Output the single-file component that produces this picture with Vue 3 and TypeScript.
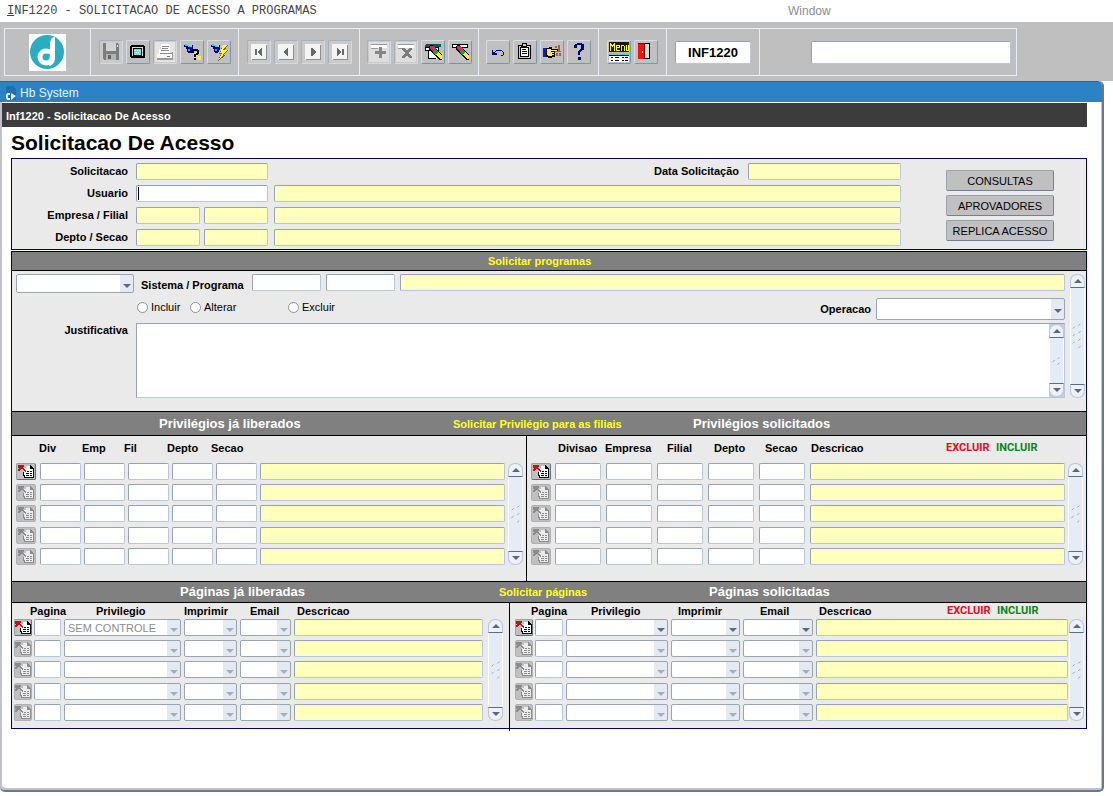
<script setup lang="ts">
import { ref } from 'vue'

interface Shape {
  d: string
  fill?: string
  stroke?: string
  width?: number
}
interface Tool {
  name: string
  disabled?: boolean
  shapes: Shape[]
}

const navBox: Shape[] = [
  { d: 'M4 4h16v16H4z', fill: '#f4f4f4' },
  { d: 'M19 5v14H5v1h15V5z', fill: '#8f8f8f' },
]

const pointer: Shape[] = [
  { d: 'M4 5h3v1h2v1h3v-2h1v5h-1v2h-1v1h-3v-1H7V9H6V7H4z', fill: '#000080' },
  { d: 'M5 4h2v1h2v1h2v1H8V6H5z', fill: '#2fd5e8' },
  { d: 'M8 9h2v2H8z', fill: '#19a8e0' },
]

const eraser: Shape[] = [
  { d: 'M9 5h3l9 10v5h-3L8 10V6z', fill: '#000' },
  { d: 'M9 6h3l3 3-3 3-3-3z', fill: '#e0246a' },
  { d: 'M14 9l3 3-3 3-3-3z', fill: '#18a048' },
  { d: 'M17 12l4 4v3h-2l-4-4z', fill: '#ffee20' },
]

const toolGroups: Tool[][] = [
  [
    {
      name: 'Salvar',
      disabled: true,
      shapes: [
        { d: 'M4 3h15v1h1v16H5v-1H4z', fill: '#7d7d7d' },
        { d: 'M7 3h10v8H7z', fill: '#d2d2d2' },
        { d: 'M7 14h10v6H7z', fill: '#b4b4b4' },
        { d: 'M9 15h3v4H9z', fill: '#666' },
        { d: 'M18 5h1v2h-1z', fill: '#eee' },
      ],
    },
    {
      name: 'Tela',
      shapes: [
        { d: 'M5 5h13v1h1v12H5v-1H4V6h1z', fill: '#000' },
        { d: 'M6 7h11v9H6z', fill: '#dcdcdc' },
        { d: 'M7 8h9v8H7z', fill: '#000' },
        { d: 'M8 9h7v6H8z', fill: '#78dce0' },
        { d: 'M9 10h1v1H9zm2 0h1v1h-1zm2 0h1v1h-1zm-3 2h1v1h-1zm2 0h1v1h-1zm-3 2h1v1H9zm4 0h1v1h-1z', fill: '#fff' },
      ],
    },
    {
      name: 'Imprimir',
      disabled: true,
      shapes: [
        { d: 'M2 2h20v20H2z', fill: '#e4e4e4' },
        { d: 'M8 4h9v10H6V9h2z', fill: '#fff' },
        { d: 'M9 6h7v1H9zm0 2h6v1H9zm-1 2h8v1H8zm-1 3h12v1H7z', fill: '#8a8a8a' },
        { d: 'M4 14h15v4H4z', fill: '#f8f8f8' },
        { d: 'M4 18h16v2H4zm15-6h1v7h-1z', fill: '#9a9a9a' },
        { d: 'M14 16h3v1h-3z', fill: '#777' },
      ],
    },
    {
      name: 'Entrar consulta',
      shapes: [
        { d: 'M15 12h5v2h-2v2h3v4h-4v-2h-3v-2h2v-2h-1z', fill: '#f2e85a' },
        ...pointer,
        { d: 'M11 10h2V9h5v1h1v4h-1v1h-2v2h-2v-3h2v-1h1v-2h-3v2h-3zM14 18h2v2h-2z', fill: '#000' },
      ],
    },
    {
      name: 'Executar consulta',
      shapes: [
        ...pointer,
        { d: 'M16 5h5l-3 5h3l-4 5h2l-8 6 3-7h-2z', fill: '#6b6300' },
        { d: 'M16 5h4l-4 5h4l-5 5h2l-5 4 3-6h-2z', fill: '#ffff20' },
      ],
    },
  ],
  [
    { name: 'Primeiro', disabled: true, shapes: [...navBox, { d: 'M8 9h2v6H8zm7-1v8h-1l-3-4 3-4z', fill: '#686868' }] },
    { name: 'Anterior', disabled: true, shapes: [...navBox, { d: 'M13 8h1v8h-1l-4-4z', fill: '#686868' }] },
    { name: 'Proximo', disabled: true, shapes: [...navBox, { d: 'M10 8h1l4 4-4 4h-1z', fill: '#686868' }] },
    { name: 'Ultimo', disabled: true, shapes: [...navBox, { d: 'M9 8h1l3 4-3 4H9zm5 1h2v6h-2z', fill: '#686868' }] },
  ],
  [
    {
      name: 'Inserir registro',
      disabled: true,
      shapes: [
        { d: 'M2 2h20v20H2z', fill: '#dedede' },
        { d: 'M4 4h16v4H4z', fill: '#fff' },
        { d: 'M4 4h16v1H4zM4 8h7v1H4z', fill: '#999' },
        { d: 'M12 7h3v4h4v3h-4v4h-3v-4H8v-3h4z', fill: '#858585' },
      ],
    },
    {
      name: 'Remover registro',
      disabled: true,
      shapes: [
        { d: 'M2 2h20v20H2z', fill: '#dedede' },
        { d: 'M4 4h16v4H4z', fill: '#fff' },
        { d: 'M4 4h16v1H4zM4 8h5v1H4z', fill: '#999' },
        { d: 'M8 8h3l2 3 2-3h3v1l-3 4 3 4v1h-3l-2-3-2 3H8v-1l3-4-3-4z', fill: '#7c7c7c' },
      ],
    },
    {
      name: 'Limpar bloco',
      shapes: [
        { d: 'M5 4h15v3H4V5h1z', fill: '#0b5650' },
        { d: 'M4 7h14v4H4z', fill: '#000' },
        { d: 'M5 8h12v2H5z', fill: '#fff' },
        { d: 'M8 11h8v8H8z', fill: '#fff' },
        { d: 'M7 11h1v7H7zm0 7h8v1H7z', fill: '#000' },
        ...eraser,
      ],
    },
    {
      name: 'Limpar registro',
      shapes: [
        { d: 'M4 4h16v4H4z', fill: '#000' },
        { d: 'M5 5h14v2H5z', fill: '#fff' },
        ...eraser,
      ],
    },
  ],
  [
    {
      name: 'Desfazer',
      shapes: [
        { d: 'M6 10h1v2h2v1h2v2H6z', fill: '#000080' },
        { d: 'M8 13l3-3h4l2 2v3l-2 1', stroke: '#000080', width: 1 },
      ],
    },
    {
      name: 'Area de transferencia',
      shapes: [
        { d: 'M5 5h13v14H5z', fill: '#000' },
        { d: 'M6 6h11v12H6z', fill: '#d9d36a' },
        { d: 'M7 7h9v10H7z', fill: '#000' },
        { d: 'M8 8h7v8H8z', fill: '#fff' },
        { d: 'M9 3h5v4H8V5h1z', fill: '#000' },
        { d: 'M10 4h3v2h-3z', fill: '#f4e900' },
        { d: 'M9 9h4v1H9zm0 2h5v1H9zm0 2h5v1H9z', fill: '#000080' },
      ],
    },
    {
      name: 'Selecionar',
      shapes: [
        { d: 'M3 8h3v9H3z', fill: '#0020c8' },
        { d: 'M6 8h3V7h3v2h6v2h-3v6h-3v1H8v-1H6z', fill: '#000' },
        { d: 'M7 9h4v1h6v1h-6v1h3v1h-2v1h2v1h-2v1H8v-1H7z', fill: '#f4e66b' },
        { d: 'M15 6h2v2h-2zm3-1h2v3h-2zm-3 6h6v1h-6zm3-3h2v3h-2zm-2 5h2v3h-2zm3 0h2v3h-2z', fill: '#cf4848' },
      ],
    },
    {
      name: 'Ajuda',
      shapes: [
        { d: 'M7 5h1V4h2V3h5v1h2v6h-2v1h-1v1h-1v3h-2v-4h1v-1h1V9h1V5h-4v3H7zM11 17h3v3h-3z', fill: '#000084' },
      ],
    },
  ],
  [
    {
      name: 'Menu',
      shapes: [
        { d: 'M2 2h20v10H2z', fill: '#1a1900' },
        { d: 'M3 3h1v1h1v1h1V4h1V3h1v8H7V6H6v1H5V6H4v5H3zm6 2h4v3h-3v2h3v1H9zm1 1v1h2V6zm4-1h3v1h1v5h-1V6h-2v5h-1zm5 0h1v5h1V5h1v6h-3z', fill: '#f7f020' },
        { d: 'M2 13h20v2H2z', fill: '#62d2ce' },
        { d: 'M2 15h20v7H2z', fill: '#fff' },
        { d: 'M2 15h20v1H2zM4 17h2v1H4zm4 0h4v1H8zm7 0h2v1h-2zm3 0h3v1h-3zM4 20h2v1H4zm4 0h4v1H8zm7 0h2v1h-2zm3 0h3v1h-3z', fill: '#000' },
      ],
    },
    {
      name: 'Sair',
      shapes: [
        { d: 'M4 3h12v16H4z', fill: '#000' },
        { d: 'M11 4h4v14h-4z', fill: '#dcdcdc' },
        { d: 'M4 4h6v13l-2 2H4z', fill: '#f01414' },
        { d: 'M4 3h7v15h-1V4H4z', fill: '#7c0000' },
        { d: 'M8 11h1v2H8z', fill: '#ffe060' },
      ],
    },
  ],
]

interface Column {
  label: string
  kind: 'code' | 'list' | 'desc'
}
interface Pane {
  id: string
  title: string
  listsActive?: boolean
  marks?: boolean
  headings: string[]
  columns: Column[]
}
interface Section {
  id: string
  caption: string
  panes: Pane[]
}

const codes = (labels: string[]): Column[] => labels.map((label) => ({ label, kind: 'code' }))
const desc: Column = { label: 'Descricao', kind: 'desc' }
const pageColumns: Column[] = [
  { label: 'Pagina', kind: 'code' },
  { label: 'Privilegio', kind: 'list' },
  { label: 'Imprimir', kind: 'list' },
  { label: 'Email', kind: 'list' },
  desc,
]
const pageHeadings = ['Pagina', 'Privilegio', 'Imprimir', 'Email', 'Descricao']

const sections: Section[] = [
  {
    id: 'privileges',
    caption: 'Solicitar Privilégio para as filiais',
    panes: [
      {
        id: 'priv-granted',
        title: 'Privilégios já liberados',
        headings: ['Div', 'Emp', 'Fil', 'Depto', 'Secao'],
        columns: [...codes(['Div', 'Emp', 'Fil', 'Depto', 'Secao']), desc],
      },
      {
        id: 'priv-requested',
        title: 'Privilégios solicitados',
        marks: true,
        headings: ['Divisao', 'Empresa', 'Filial', 'Depto', 'Secao', 'Descricao'],
        columns: [...codes(['Divisao', 'Empresa', 'Filial', 'Depto', 'Secao']), desc],
      },
    ],
  },
  {
    id: 'pages',
    caption: 'Solicitar páginas',
    panes: [
      { id: 'page-granted', title: 'Páginas já liberadas', headings: pageHeadings, columns: pageColumns },
      {
        id: 'page-requested',
        title: 'Páginas solicitadas',
        marks: true,
        listsActive: true,
        headings: pageHeadings,
        columns: pageColumns,
      },
    ],
  },
]

const actions = ['CONSULTAS', 'APROVADORES', 'REPLICA ACESSO']
const operations = ['Incluir', 'Alterar', 'Excluir']
const operation = ref('')
const program = ref('INF1220')
</script>

<template>
  <div class="app">
    <nav class="menubar">
      <button type="button" class="menu-main"><u>I</u>NF1220 - SOLICITACAO DE ACESSO A PROGRAMAS</button>
      <button type="button" class="menu-window">Window</button>
    </nav>

    <header class="toolbar">
      <div class="segment seg-logo">
        <svg class="logo" viewBox="0 0 37 37" aria-hidden="true">
          <path d="M0 0h37v37H0z" fill="#fff" />
          <circle cx="18" cy="18" r="17" fill="#28aec0" />
          <circle cx="17" cy="23" r="6" fill="none" stroke="#fff" stroke-width="5" />
          <path d="M21 25V10q0-7 5-7v22q-1 6-6 7z" fill="#fff" />
          <path d="M14 24q2-5 7-4 0 5-5 6z" fill="#28aec0" />
        </svg>
      </div>
      <div v-for="(group, g) in toolGroups" :key="g" class="segment" :class="'seg-' + g">
        <button
          v-for="tool in group"
          :key="tool.name"
          type="button"
          class="tool"
          :aria-label="tool.name"
          :disabled="tool.disabled"
        >
          <svg viewBox="1 1 22 22" shape-rendering="crispEdges" aria-hidden="true">
            <path
              v-for="(s, i) in tool.shapes"
              :key="i"
              :d="s.d"
              :fill="s.fill ?? 'none'"
              :stroke="s.stroke"
              :stroke-width="s.width"
            />
          </svg>
        </button>
      </div>
      <div class="segment seg-code">
        <input v-model="program" class="field program-code" aria-label="Programa" />
      </div>
      <div class="segment seg-message">
        <input class="field message" aria-label="Mensagem" />
      </div>
    </header>

    <main class="window">
      <div class="titlebar">
        <svg viewBox="0 0 12 14" aria-hidden="true">
          <path d="M1 0h7l3 3v11H1z" fill="#1f6fae" />
          <path d="M1 9l1-2h3v2H3v3h2v2H2l-1-2zM6 7l5 3-5 4z" fill="#e6f3fb" />
        </svg>
        <span>Hb System</span>
      </div>
      <div class="module">Inf1220 - Solicitacao De Acesso</div>

      <div class="content">
        <h1>Solicitacao De Acesso</h1>

        <form class="request" @submit.prevent>
          <div class="request-fields">
            <div class="row">
              <label class="caption" for="solicitacao">Solicitacao</label>
              <input id="solicitacao" class="field locked wide-code" readonly />
              <label class="date-label" for="data">Data Solicitação</label>
              <input id="data" class="field locked date" readonly />
            </div>
            <div class="row">
              <label class="caption" for="usuario">Usuario</label>
              <span class="caret-box wide-code"><input id="usuario" class="field" /></span>
              <input class="field locked grow" aria-label="Nome do usuario" readonly />
            </div>
            <div class="row">
              <label class="caption" for="empresa">Empresa / Filial</label>
              <span class="pair">
                <input id="empresa" class="field locked" readonly />
                <input class="field locked" aria-label="Filial" readonly />
              </span>
              <input class="field locked grow" aria-label="Nome da filial" readonly />
            </div>
            <div class="row">
              <label class="caption" for="depto">Depto / Secao</label>
              <span class="pair">
                <input id="depto" class="field locked" readonly />
                <input class="field locked" aria-label="Secao" readonly />
              </span>
              <input class="field locked grow" aria-label="Nome da secao" readonly />
            </div>
          </div>
          <div class="actions">
            <button v-for="a in actions" :key="a" type="button">{{ a }}</button>
          </div>
        </form>

        <div class="blocks">
          <section>
            <div class="bar bar-programs"><h2 class="yellow">Solicitar programas</h2></div>
            <div class="programs">
              <div class="programs-main">
                <div class="program-row">
                  <span class="combo active kind"><select aria-label="Tipo"><option></option></select></span>
                  <label for="sistema">Sistema / Programa</label>
                  <input id="sistema" class="field short" />
                  <input class="field short" aria-label="Codigo do programa" />
                  <input class="field locked grow" aria-label="Nome do programa" readonly />
                </div>
                <div class="options-row">
                  <label v-for="o in operations" :key="o" class="option">
                    <input v-model="operation" type="radio" name="operation" :value="o" />{{ o }}
                  </label>
                  <label class="operation-label" for="operacao">Operacao</label>
                  <span class="combo active operation"><select id="operacao"><option></option></select></span>
                </div>
                <div class="reason-row">
                  <label class="caption" for="justificativa">Justificativa</label>
                  <div class="reason">
                    <textarea id="justificativa"></textarea>
                    <div class="scroll">
                      <button type="button" aria-label="Subir texto"></button>
                      <span class="track">
                        <svg viewBox="0 0 14 28" aria-hidden="true">
                          <path d="M3 15l2-2M8 12l2-2M8 18l2-2" />
                        </svg>
                      </span>
                      <button type="button" class="down" aria-label="Descer texto"></button>
                    </div>
                  </div>
                </div>
              </div>
              <div class="scroll">
                <button type="button" aria-label="Programa anterior"></button>
                <span class="track">
                  <svg viewBox="0 0 14 28" aria-hidden="true">
                    <path d="M2 6l2-2M8 3l2-2M2 14l2-2M8 11l2-2M2 22l2-2M8 19l2-2M8 27l2-2" />
                  </svg>
                </span>
                <button type="button" class="down" aria-label="Proximo programa"></button>
              </div>
            </div>
          </section>

          <section v-for="section in sections" :key="section.id" :class="section.id">
            <div class="bar">
              <h2>{{ section.panes[0].title }}</h2>
              <h2 class="yellow">{{ section.caption }}</h2>
              <h2>{{ section.panes[1].title }}</h2>
            </div>
            <div class="panes">
              <div v-for="pane in section.panes" :key="pane.id" class="pane" :class="pane.id">
                <table :aria-label="pane.title">
                  <thead>
                    <tr>
                      <th v-for="h in pane.headings" :key="h" scope="col">{{ h }}</th>
                      <th v-if="pane.marks" class="exclude" scope="col">EXCLUIR</th>
                      <th v-if="pane.marks" class="include" scope="col">INCLUIR</th>
                    </tr>
                  </thead>
                  <tbody>
                    <tr v-for="n in 5" :key="n">
                      <td>
                        <button type="button" class="move" :disabled="n > 1" :aria-label="'Mover linha ' + n">
                          <svg viewBox="0 0 16 15" shape-rendering="crispEdges" aria-hidden="true">
                            <path class="page" d="M6 4h2V2h5l3 3v9H6z" />
                            <path class="ink" d="M12 1h1v1h1v1h1v1h1v1h-4zM15 5h1v9h-1zM7 13h9v1H7zM9 7h2v1H9zm3 0h2v1h-2zM8 9h3v1H8zm4 0h2v1h-2zM8 11h3v1H8zm4 0h2v1h-2zM5 8h1v3h1v3H6v-2H5z" />
                            <path class="arrow" d="M0 1h6v2H5v1h1v1h1v1h1v2H7V7H6V6H5V5H3v1H2v1H0V5h1V4H0z" />
                          </svg>
                        </button>
                      </td>
                      <td v-for="col in pane.columns" :key="col.label">
                        <span
                          v-if="col.kind === 'list'"
                          class="combo"
                          :class="{ active: pane.listsActive && n === 1 }"
                        >
                          <select :aria-label="col.label + ' ' + n" :disabled="!(pane.listsActive && n === 1)">
                            <option>{{ pane.id === 'page-granted' && n === 1 && col.label === 'Privilegio' ? 'SEM CONTROLE' : '' }}</option>
                          </select>
                        </span>
                        <input
                          v-else
                          class="field"
                          :class="{ locked: col.kind === 'desc' }"
                          :readonly="col.kind === 'desc'"
                          :aria-label="col.label + ' ' + n"
                        />
                      </td>
                    </tr>
                  </tbody>
                </table>
                <div class="scroll">
                  <button type="button" aria-label="Linha anterior"></button>
                  <span class="track">
                    <svg viewBox="0 0 14 28" aria-hidden="true">
                      <path d="M3 10l2-2M9 7l2-2M3 18l2-2M9 15l2-2M9 23l2-2" />
                    </svg>
                  </span>
                  <button type="button" class="down" aria-label="Proxima linha"></button>
                </div>
              </div>
            </div>
          </section>
        </div>
      </div>
    </main>
  </div>
</template>

<style>
body {
  margin: 0;
  background: #fff;
}
</style>

<style scoped>
* {
  box-sizing: border-box;
}
.app {
  display: flex;
  flex-direction: column;
  min-height: 100vh;
  padding-bottom: 4px;
  font: 11px/14px "Liberation Sans", Arial, sans-serif;
  color: #000;
  background: #fff;
}
button,
input,
select,
textarea {
  font: inherit;
  color: inherit;
  margin: 0;
  padding: 0;
}
button {
  cursor: pointer;
}
:focus-visible {
  outline: 1px solid #2b83c5;
}

/* menu and toolbar */
.menubar {
  display: flex;
  height: 22px;
  align-items: center;
}
.menubar button {
  border: 0;
  background: none;
  text-align: left;
}
.menu-main {
  flex: 781 1 0;
  padding-left: 7px;
  font: 12px/16px "Liberation Mono", "Courier New", monospace;
  color: #444;
}
.menu-window {
  flex: 325 1 0;
  font-size: 12px;
  color: #8c8c92;
}
.toolbar {
  display: flex;
  height: 59px;
  padding: 6px 96px 5px 4px;
  background: #bfbfbf;
}
.segment {
  display: flex;
  flex: none;
  align-items: center;
  justify-content: center;
  gap: 3px;
  border: solid #e9edf5;
  border-width: 1px 0 1px 1px;
}
.seg-logo { width: 86px; }
.seg-0 { width: 148px; }
.seg-1 { width: 121px; }
.seg-2 { width: 119px; }
.seg-3 { width: 120px; }
.seg-4 { width: 68px; }
.seg-code { width: 93px; }
.seg-message {
  flex: 1;
  min-width: 0;
  padding: 0 5px 0 51px;
  border-right-width: 1px;
}
.logo {
  width: 37px;
  height: 37px;
}
.tool {
  width: 24px;
  height: 24px;
  border: 1px solid;
  border-color: #d9dde3 #7d93b0 #7d93b0 #d9dde3;
  border-radius: 2px;
  background: #c0c0c0;
}
.tool:disabled {
  border-color: #a9afb8 #d5dae2 #d5dae2 #a9afb8;
  background: #cacaca;
}
.tool svg {
  display: block;
  width: 22px;
  height: 22px;
}

/* shared controls */
.field {
  display: block;
  min-width: 0;
  width: 100%;
  height: 17px;
  padding: 0 3px;
  border: 1px solid;
  border-color: #98a2b0 #b8c6da #b8c6da #98a2b0;
  border-radius: 2px;
  background: #fff;
}
.field.locked {
  background: #ffffbe;
}
.field.grow {
  flex: 1;
}
.program-code {
  width: 76px;
  height: 23px;
  font-size: 13px;
  font-weight: bold;
  text-align: center;
}
.message {
  height: 23px;
}
.combo {
  position: relative;
  display: block;
  height: 17px;
}
.combo select {
  display: block;
  width: 100%;
  height: 100%;
  padding: 0 14px 0 3px;
  appearance: none;
  border: 1px solid #9aa4b2;
  border-radius: 2px;
  background: linear-gradient(to left, #e5eaf2 13px, #fff 13px);
  color: #8c8c8c;
  opacity: 1;
}
.combo::after {
  content: "";
  position: absolute;
  right: 3px;
  top: 50%;
  border: 4px solid transparent;
  border-top-color: #a6adb6;
  border-bottom: 0;
  pointer-events: none;
}
.combo.active::after {
  border-top-color: #5c6878;
}
.scroll {
  display: flex;
  flex: none;
  flex-direction: column;
  width: 15px;
}
.scroll button {
  display: flex;
  align-items: center;
  justify-content: center;
  height: 14px;
  border: 1px solid #b7c6da;
  border-bottom-color: #5f6d80;
  border-radius: 7px 7px 0 0;
  background: #edf2fa;
}
.scroll button::after {
  content: "";
  border: 4px solid transparent;
  border-top: 0;
  border-bottom-color: #5c6878;
}
.scroll button.down {
  border-color: #5f6d80 #b7c6da #b7c6da;
  border-radius: 0 0 7px 7px;
}
.scroll button.down::after {
  border-top: 4px solid #5c6878;
  border-bottom: 0;
}
.track {
  display: flex;
  flex: 1;
  align-items: center;
  border: solid #fff;
  border-width: 0 1px;
  background: #e6ecf5;
}
.track svg {
  width: 13px;
  height: 28px;
  fill: none;
  stroke: #8d9bae;
}

/* window */
.window {
  display: flex;
  flex: 1;
  flex-direction: column;
  margin-right: 9px;
  border: solid #68798f;
  border-width: 0 2px 2px 0;
  border-radius: 0 5px 5px 5px;
  box-shadow: inset 2px -2px 0 #bfc1cb, inset -1px 0 0 #b7c7de;
}
.titlebar {
  display: flex;
  align-items: center;
  gap: 3px;
  height: 21px;
  padding: 1px 0 0 5px;
  border-top: 1px solid #2a6795;
  border-radius: 0 5px 0 0;
  background: #2b83c5;
  color: #e6f3fb;
  font-size: 12px;
}
.titlebar svg {
  width: 12px;
  height: 14px;
}
.module {
  height: 24px;
  margin: 1px 15px 0 2px;
  padding: 0 4px;
  background: #3c3c3c;
  color: #fff;
  font-weight: bold;
  line-height: 26px;
}
.content {
  padding: 0 15px 0 11px;
  font-weight: bold;
}
h1,
h2 {
  margin: 0;
}
h1 {
  height: 31px;
  font-size: 21px;
  line-height: 32px;
}

/* request header */
.request {
  display: flex;
  gap: 45px;
  height: 92px;
  padding: 1px 32px 0 0;
  border: 1px solid #00005c;
  background: #eaeaeb;
}
.request-fields {
  flex: 1;
}
.row {
  display: flex;
  align-items: center;
  height: 22px;
  gap: 6px;
}
.row .field,
.row .caret-box {
  flex: none;
}
.row .grow {
  flex: 1;
}
.caption {
  width: 116px;
  flex: none;
  margin-right: 2px;
  text-align: right;
}
.row .wide-code,
.pair {
  width: 132px;
  flex: none;
}
.pair {
  display: grid;
  grid-template-columns: 1fr 1fr;
  gap: 4px;
}
.caret-box {
  position: relative;
}
.caret-box::after {
  content: "";
  position: absolute;
  left: 2px;
  top: 2px;
  width: 1px;
  height: 13px;
  background: #000;
}
.date-label {
  flex: 1;
  margin-right: 3px;
  text-align: right;
}
.row .date {
  width: 153px;
}
.actions {
  display: flex;
  flex-direction: column;
  gap: 4px;
  width: 108px;
  padding-top: 10px;
}
.actions button {
  height: 21px;
  border: 1px solid #98a2af;
  border-right-color: #6f8099;
  border-bottom-color: #6f8099;
  border-radius: 2px;
  background: #c0c0c0;
  font-weight: normal;
  white-space: nowrap;
}

/* blocks */
.blocks {
  margin-top: 1px;
  border: solid #00005c;
  border-width: 0 1px 1px;
  background: #eaeaeb;
}
.bar {
  display: grid;
  align-items: center;
  height: 25px;
  border: solid #000;
  border-width: 1px 0;
  background: #808080;
  color: #fff;
  white-space: nowrap;
}
.bar h2 {
  font-size: 13px;
  line-height: 16px;
}
.bar h2.yellow {
  color: #ffff1e;
  font-size: 11px;
}
.bar-programs {
  height: 20px;
  padding-left: 476px;
}
.programs {
  display: flex;
  gap: 5px;
  height: 140px;
  padding: 3px 1px 13px 4px;
}
.programs-main {
  display: flex;
  flex: 1;
  flex-direction: column;
}
.program-row {
  display: flex;
  gap: 5px;
}
.program-row label {
  width: 108px;
  padding: 4px 0 0 2px;
  white-space: nowrap;
}
.program-row .short {
  flex: none;
  width: 69px;
}
.kind {
  width: 118px;
  height: 19px;
}
.options-row {
  display: flex;
  align-items: center;
  height: 30px;
  padding-left: 121px;
  padding-top: 2px;
}
.option {
  display: flex;
  align-items: center;
  gap: 3px;
  width: 53px;
  padding-bottom: 4px;
  font-weight: normal;
}
.option:nth-of-type(2) {
  width: 98px;
}
.option input {
  width: 11px;
  height: 11px;
  appearance: none;
  border: 1px solid #8e9298;
  border-radius: 50%;
  background: #fff;
}
.option input:checked {
  background: radial-gradient(#333 3px, #fff 3px);
}
.operation-label {
  flex: 1;
  margin-right: 5px;
  text-align: right;
}
.operation {
  width: 189px;
  height: 22px;
}
.reason-row {
  display: flex;
  flex: 1;
}
.reason-row .caption {
  width: 112px;
  margin-right: 8px;
}
.reason {
  display: flex;
  flex: 1;
  border: 1px solid;
  border-color: #98a2b0 #b8c6da #b8c6da #98a2b0;
  background: #fff;
}
.reason textarea {
  flex: 1;
  border: 0;
  resize: none;
  font-weight: normal;
}
.reason .scroll {
  background: #c4d0e0;
}

/* tables */
.panes {
  display: grid;
}
.privileges .bar {
  grid-template-columns: 294fr 240fr 393fr;
  padding-left: 147px;
}
.privileges .panes {
  grid-template-columns: 515fr 559fr;
}
.pages .bar {
  grid-template-columns: 319fr 210fr 377fr;
  height: 22px;
  padding-left: 168px;
}
.pages .panes {
  grid-template-columns: 498fr 576fr;
}
.pane {
  --head: 27px;
  display: flex;
  gap: 3px;
  padding: 0 3px 12px 4px;
}
.pane:first-child {
  border-right: 1px solid #000;
}
.pane .scroll {
  margin: var(--head) 0 4px;
}
table,
thead,
tbody {
  display: block;
}
table {
  flex: 1;
  min-width: 0;
}
tr {
  display: grid;
}
thead tr {
  height: var(--head);
  padding-bottom: 3px;
  align-items: center;
  white-space: nowrap;
}
tbody tr {
  height: 21px;
}
tbody tr:nth-child(3) {
  height: 22px;
}
th,
td {
  display: block;
  padding: 0;
  min-width: 0;
  text-align: left;
}
.exclude,
.include {
  font-family: Roboto, "Liberation Sans", sans-serif;
}
.exclude {
  color: #e80c1c;
}
.include {
  color: #0a8418;
}
.move {
  display: flex;
  align-items: center;
  justify-content: center;
  width: 20px;
  height: 17px;
  border: 1px solid #9a9fa6;
  border-right-color: #5f6d80;
  border-bottom-color: #5f6d80;
  border-radius: 2px;
  background: #c0c0c0;
}
.move:disabled {
  border-color: #adb0b5;
}
.move svg {
  width: 16px;
  height: 15px;
  flex: none;
}
.move .page { fill: #fff; }
.move .ink { fill: #000; }
.move .arrow { fill: #d00a14; }
.move:disabled .page { fill: #ececec; }
.move:disabled .ink,
.move:disabled .arrow { fill: #8b8b8b; }

.priv-granted tbody tr {
  grid-template-columns: 21px repeat(5, 41px) 1fr;
  column-gap: 3px;
}
.priv-granted thead tr {
  grid-template-columns: 43px 42px 43px 44px 1fr;
  padding-left: 23px;
}
.priv-requested tbody tr {
  grid-template-columns: 19px repeat(5, 46px) 1fr;
  column-gap: 5px;
}
.priv-requested thead tr {
  grid-template-columns: 47px 62px 47px 51px 46px 1fr 50px 69px;
  padding-left: 27px;
}
.pages .pane {
  --head: 16px;
  gap: 5px;
  padding: 0 6px 3px 2px;
}
.pages thead tr {
  padding-bottom: 1px;
}
.pages .move {
  width: 18px;
}
.pages .page-granted {
  margin-bottom: -3px;
  padding-bottom: 6px;
}
.page-granted tbody tr {
  grid-template-columns: 17px 27px 117px 53px 51px 1fr;
  column-gap: 3px;
}
.page-granted thead tr {
  grid-template-columns: 66px 88px 66px 47px 1fr;
  padding-left: 16px;
}
.pages .page-requested {
  gap: 1px;
  padding: 0 2px 3px 5px;
}
.page-requested tbody tr {
  grid-template-columns: 17px 28px 102px 69px 70px 1fr;
  column-gap: 3px;
}
.page-requested thead tr {
  grid-template-columns: 60px 87px 82px 59px 1fr 50px 71px;
  padding-left: 16px;
}
.pages .combo select {
  font-weight: normal;
}
</style>
